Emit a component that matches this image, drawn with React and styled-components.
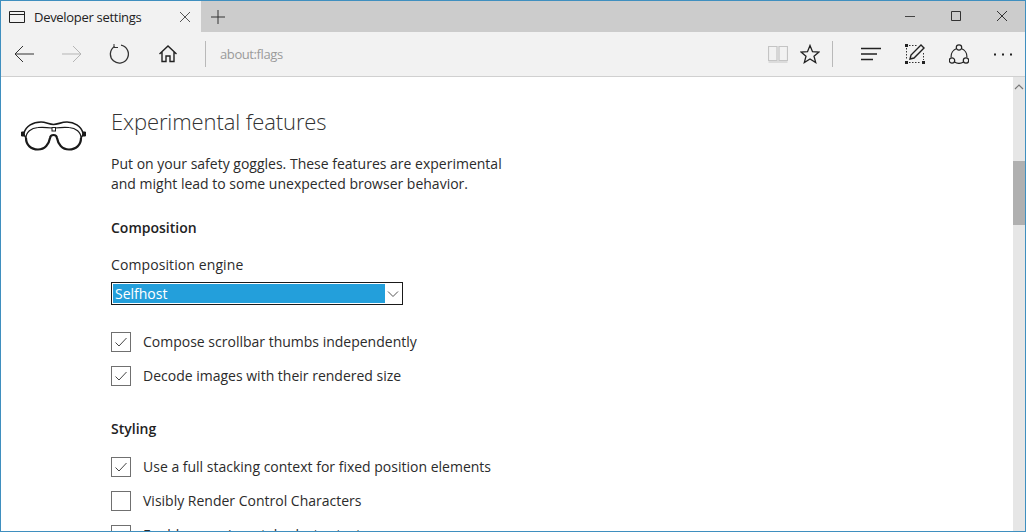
import React from 'react';
import styled, { createGlobalStyle } from 'styled-components';

const GlobalStyle = createGlobalStyle`
  html, body {
    margin: 0;
    padding: 0;
    background: #fff;
  }
  * {
    box-sizing: border-box;
  }
`;

const Window = styled.div`
  width: 1026px;
  height: 532px;
  display: flex;
  flex-direction: column;
  overflow: hidden;
  border: 1px solid #3f8fbf;
  font-family: "Open Sans", "Noto Sans", sans-serif;
  color: #2b2b2b;
`;

const TitleBar = styled.div`
  height: 31px;
  flex: none;
  display: flex;
  background: #cccccc;
`;

const Tab = styled.div`
  width: 200px;
  display: flex;
  align-items: center;
  padding: 0 10px 0 8px;
  background: #f2f2f2;
`;

const TabTitle = styled.span`
  flex: 1;
  margin-left: 9px;
  font-size: 13px;
  letter-spacing: -0.3px;
  color: #222;
`;

const NewTab = styled.div`
  width: 32px;
  margin-left: 1px;
  display: flex;
  align-items: center;
  justify-content: center;
`;

const WindowControls = styled.div`
  margin-left: auto;
  display: flex;
`;

const WindowButton = styled.div`
  width: 46px;
  padding-bottom: 1px;
  display: flex;
  align-items: center;
  justify-content: center;
`;

const Toolbar = styled.div`
  height: 45px;
  flex: none;
  display: flex;
  align-items: center;
  background: #f2f2f2;
  border-bottom: 1px solid #d0d0d0;
`;

const NavButton = styled.div`
  width: ${props => props.$width || 47}px;
  height: 44px;
  display: flex;
  align-items: center;
  justify-content: center;
`;

const Divider = styled.div`
  width: 1px;
  height: 26px;
  background: #b9b9b9;
  margin: ${props => props.$margin};
`;

const Address = styled.div`
  flex: 1;
  margin-left: 14px;
  font-size: 13px;
  letter-spacing: -0.4px;
  color: #9a9a9a;
`;

const ToolGroup = styled.div`
  display: flex;
  align-items: center;
`;

const ToolButton = styled.div`
  width: ${props => props.$width || 44}px;
  height: 44px;
  display: flex;
  align-items: center;
  justify-content: center;
`;

const Body = styled.div`
  flex: 1;
  min-height: 0;
  display: flex;
`;

const Page = styled.div`
  flex: 1;
  min-width: 0;
  display: flex;
  overflow: hidden;
  background: #fff;
`;

const Gutter = styled.div`
  width: 110px;
  flex: none;
  padding: 44px 0 0 20px;
`;

const Content = styled.div`
  flex: 1;
  min-width: 0;
  padding-top: 29px;
`;

const Heading = styled.h1`
  margin: 0;
  font-size: 22px;
  line-height: 30px;
  font-weight: 300;
  letter-spacing: -0.1px;
  color: #333;
`;

const Intro = styled.p`
  margin: 18px 0 0;
  font-size: 14px;
  line-height: 20px;
  color: #2b2b2b;
`;

const SectionTitle = styled.h2`
  margin: ${props => props.$top}px 0 0;
  font-size: 14px;
  line-height: 20px;
  font-weight: 600;
  color: #222;
`;

const FieldLabel = styled.div`
  margin-top: 17px;
  font-size: 14px;
  line-height: 20px;
  letter-spacing: 0.1px;
`;

const Select = styled.div`
  width: 292px;
  height: 23px;
  margin-top: 7px;
  padding: 1px;
  display: flex;
  background: #fff;
  border: 1px solid #1a1a1a;
`;

const SelectValue = styled.div`
  width: 272px;
  padding-left: 2px;
  background: #239fdb;
  color: #fff;
  font-size: 14px;
  line-height: 19px;
`;

const SelectArrow = styled.div`
  flex: 1;
  display: flex;
  align-items: center;
  justify-content: center;
`;

const CheckList = styled.div`
  margin-top: ${props => props.$top}px;
  display: flex;
  flex-direction: column;
  gap: 14px;
`;

const CheckRow = styled.div`
  height: 20px;
  display: flex;
  align-items: center;
  gap: 12px;
  font-size: 14px;
  white-space: nowrap;
`;

const CheckLabel = styled.span`
  padding-bottom: 2px;
`;

const Box = styled.div`
  width: 20px;
  height: 20px;
  flex: none;
  display: flex;
  align-items: center;
  justify-content: center;
  border: 1px solid #707070;
`;

const Scrollbar = styled.div`
  width: 12px;
  flex: none;
  display: flex;
  flex-direction: column;
  background: #e6e6e6;
`;

const ScrollArrow = styled.div`
  height: 12px;
  margin-top: 5px;
  display: flex;
  justify-content: center;
`;

const ScrollThumb = styled.div`
  height: 64px;
  margin-top: 67px;
  background: #b0b0b0;
`;

const Line = ({ size = 16, children }) => (
  <svg width={size} height={size} viewBox={`0 0 ${size} ${size}`} fill="none">
    {children}
  </svg>
);

const Check = ({ on }) => (
  <Box>
    {on && (
      <Line size={16}>
        <path d="M2.500 8.500 L6 12 L13.500 4" stroke="#444" />
      </Line>
    )}
  </Box>
);

const Goggles = () => (
  <svg width="66" height="30" viewBox="0 0 66 30" fill="none" stroke="#1a1a1a">
    <path d="M3 12 C5 5 12 1 20 1 C25 1 28 3.500 32.500 3.500 C37 3.500 40 1 46 1 C53 1 60 5 62 12" strokeWidth="1.600" />
    <path d="M5 17 C5 24 10 28.500 17 28.500 C24 28.500 28 23 29 17 C29.500 13 35.500 13 36 17 C37 23 41 28.500 48 28.500 C55 28.500 60 24 60 17" strokeWidth="2.200" />
    <path d="M5 17 C5 11 10 7 17 6.500 C22 6 27 6.500 31 7 M34 7 C38 6.500 43 6 48 6.500 C55 7 60 11 60 17" strokeWidth="1.200" />
    <path d="M3 12 C3 14 4 16 5 17 M62 12 C62 14 61 16 60 17" strokeWidth="1.400" />
    <path d="M0.500 11 H3 V15 H0.500 Z M62 11 H64.500 V15 H62 Z" fill="#1a1a1a" strokeWidth="1" />
    <rect x="31" y="6.500" width="3.500" height="3.500" fill="#fff" strokeWidth="1" />
  </svg>
);

export default function App() {
  return (
    <>
      <GlobalStyle />
      <Window>
        <TitleBar>
          <Tab>
            <Line size={16}>
              <path d="M0.500 2.500 H15.500 V13.500 H0.500 Z M0.500 5.500 H15.500" stroke="#222" />
            </Line>
            <TabTitle>Developer settings</TabTitle>
            <Line size={12}>
              <path d="M1 1 L11 11 M11 1 L1 11" stroke="#555" />
            </Line>
          </Tab>
          <NewTab>
            <Line size={14}>
              <path d="M7 0 V14 M0 7 H14" stroke="#333" />
            </Line>
          </NewTab>
          <WindowControls>
            <WindowButton>
              <Line size={12}>
                <path d="M1 6.500 H11" stroke="#444" />
              </Line>
            </WindowButton>
            <WindowButton>
              <Line size={12}>
                <path d="M1.500 1.500 H10.500 V10.500 H1.500 Z" stroke="#333" />
              </Line>
            </WindowButton>
            <WindowButton>
              <Line size={12}>
                <path d="M1 1 L11 11 M11 1 L1 11" stroke="#333" />
              </Line>
            </WindowButton>
          </WindowControls>
        </TitleBar>
        <Toolbar>
          <NavButton>
            <Line size={20}>
              <path d="M19 10 H0 M8 2 L0 10 L8 18" stroke="#333" />
            </Line>
          </NavButton>
          <NavButton>
            <Line size={20}>
              <path d="M0 10 H19 M11 2 L19 10 L11 18" stroke="#b5b5b5" />
            </Line>
          </NavButton>
          <NavButton>
            <Line size={20}>
              <path d="M5.500 2.500 A9 9 0 1 0 12 1.200" stroke="#333" strokeWidth="1.300" />
              <path d="M5 0 V3.500 H9" stroke="#333" />
            </Line>
          </NavButton>
          <NavButton $width={51}>
            <Line size={20}>
              <path d="M1.500 10 L10 2 L18.500 10 M4 8 V17.500 H8 V12 H12 V17.500 H16 V8" stroke="#222" strokeWidth="1.400" />
            </Line>
          </NavButton>
          <Divider $margin="0 0 0 12px" />
          <Address>about:flags</Address>
          <ToolGroup>
            <ToolButton $width={32}>
              <Line size={20}>
                <path d="M0.500 2.500 H9 V16.500 H0.500 Z M11 2.500 H19.500 V16.500 H11 Z M0.500 18 H19.500" stroke="#c4c4c4" strokeWidth="1.200" />
              </Line>
            </ToolButton>
            <ToolButton $width={32}>
              <Line size={20}>
                <path d="M10 1.500 L12.500 7.700 L19 8 L14 12.200 L15.700 18.500 L10 15 L4.300 18.500 L6 12.200 L1 8 L7.500 7.700 Z" stroke="#222" strokeWidth="1.300" />
              </Line>
            </ToolButton>
            <Divider $margin="0 16px 0 6px" />
            <ToolButton>
              <Line size={22}>
                <path d="M1 5.500 H21 M1 11 H17 M1 16.500 H13" stroke="#222" strokeWidth="1.300" />
              </Line>
            </ToolButton>
            <ToolButton>
              <Line size={20}>
                <path d="M4 1.500 H12 M1.500 4 V16 M4 18.500 H16 M18.500 9 V16" stroke="#333" strokeDasharray="1.500 1.500" />
                <path d="M0 0 H3 V3 H0 Z M0 17 H3 V20 H0 Z M17 17 H20 V20 H17 Z" fill="#222" />
                <path d="M5 15 L6 11 L16 1 L19 4 L9 14 Z" stroke="#222" strokeWidth="1.400" />
              </Line>
            </ToolButton>
            <ToolButton>
              <Line size={20}>
                <path d="M7.700 4.500 A8.500 8.500 0 0 0 2.200 13.500 M12.300 4.500 A8.500 8.500 0 0 1 17.800 13.500 M5.500 18 A8.500 8.500 0 0 0 14.500 18" stroke="#222" strokeWidth="1.200" />
                <circle cx="10" cy="3.500" r="2.700" stroke="#222" strokeWidth="1.200" />
                <circle cx="3" cy="16.500" r="2.700" stroke="#222" strokeWidth="1.200" />
                <circle cx="17" cy="16.500" r="2.700" stroke="#222" strokeWidth="1.200" />
              </Line>
            </ToolButton>
            <ToolButton>
              <Line size={20}>
                <path d="M1 10.500 H3 M9 10.500 H11 M17 10.500 H19" stroke="#222" strokeWidth="2" />
              </Line>
            </ToolButton>
          </ToolGroup>
        </Toolbar>
        <Body>
          <Page>
            <Gutter>
              <Goggles />
            </Gutter>
            <Content>
              <Heading>Experimental features</Heading>
              <Intro>
                Put on your safety goggles. These features are experimental<br />
                and might lead to some unexpected browser behavior.
              </Intro>
              <SectionTitle $top={24}>Composition</SectionTitle>
              <FieldLabel>Composition engine</FieldLabel>
              <Select>
                <SelectValue>Selfhost</SelectValue>
                <SelectArrow>
                  <Line size={12}>
                    <path d="M1 3.500 L6 8.500 L11 3.500" stroke="#555" />
                  </Line>
                </SelectArrow>
              </Select>
              <CheckList $top={27}>
                <CheckRow><Check on /><CheckLabel>Compose scrollbar thumbs independently</CheckLabel></CheckRow>
                <CheckRow><Check on /><CheckLabel>Decode images with their rendered size</CheckLabel></CheckRow>
              </CheckList>
              <SectionTitle $top={33}>Styling</SectionTitle>
              <CheckList $top={18}>
                <CheckRow><Check on /><CheckLabel>Use a full stacking context for fixed position elements</CheckLabel></CheckRow>
                <CheckRow><Check /><CheckLabel>Visibly Render Control Characters</CheckLabel></CheckRow>
                <CheckRow><Check on /><CheckLabel>Enable experimental selector tests</CheckLabel></CheckRow>
              </CheckList>
            </Content>
          </Page>
          <Scrollbar>
            <ScrollArrow>
              <Line size={10}>
                <path d="M1 7 L5 3 L9 7" stroke="#777" strokeWidth="1.200" />
              </Line>
            </ScrollArrow>
            <ScrollThumb />
          </Scrollbar>
        </Body>
      </Window>
    </>
  );
}
